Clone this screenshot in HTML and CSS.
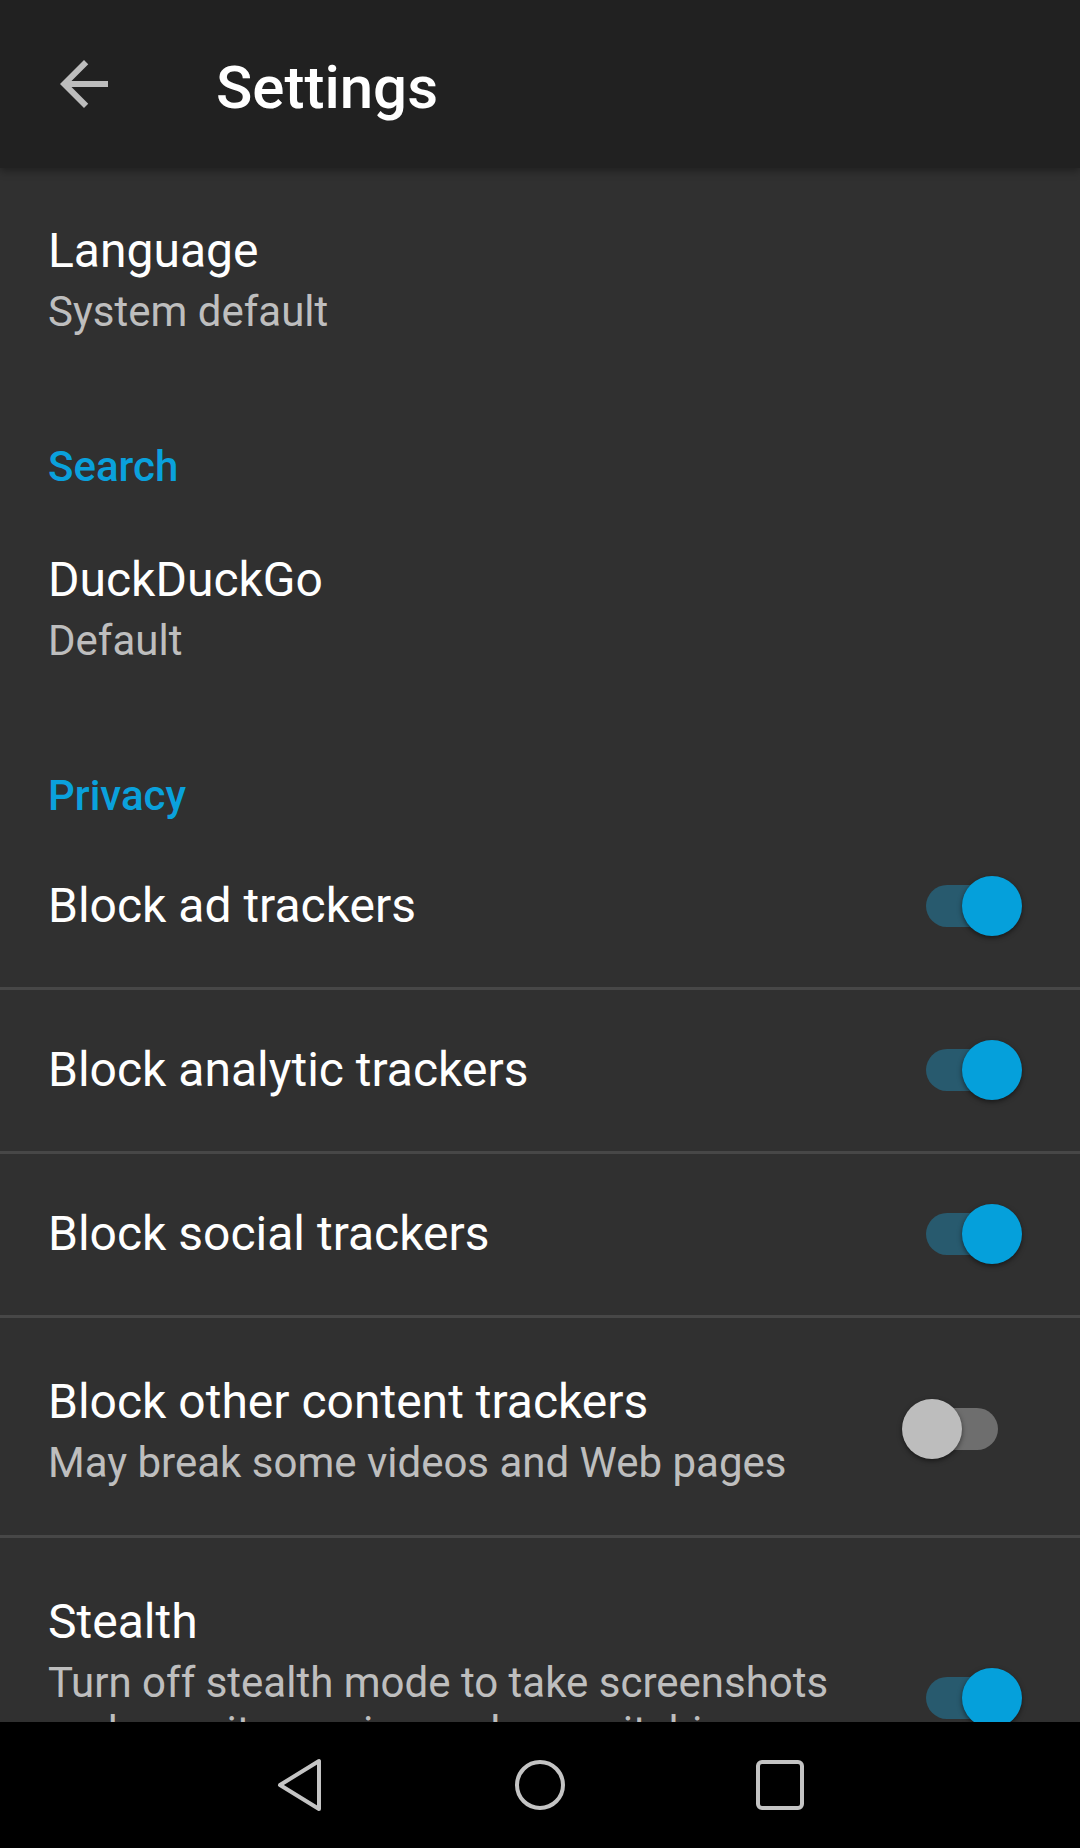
FILE: index.html
```html
<!DOCTYPE html>
<html lang="en">
<head>
<meta charset="utf-8">
<title>Settings</title>
<link rel="stylesheet" href="styles.css">
</head>
<body>
<div class="screen">
  <header class="toolbar">
    <button class="nav-back" aria-label="Back">
      <svg width="72" height="72" viewBox="0 0 24 24"><path d="M20 11H7.83l5.59-5.59L12 4l-8 8 8 8 1.41-1.41L7.83 13H20v-2z" fill="#bdbdbd"/></svg>
    </button>
    <h1 class="toolbar-title">Settings</h1>
  </header>

  <main class="content">
    <div class="pref pref-plain">
      <div class="pref-title">Language</div>
      <div class="pref-summary">System default</div>
    </div>

    <div class="category">Search</div>

    <div class="pref pref-plain">
      <div class="pref-title">DuckDuckGo</div>
      <div class="pref-summary">Default</div>
    </div>

    <div class="category">Privacy</div>

    <div class="pref pref-switch">
      <div class="pref-text"><div class="pref-title">Block ad trackers</div></div>
      <div class="switch on"><span class="track"></span><span class="thumb"></span></div>
    </div>
    <div class="pref pref-switch">
      <div class="pref-text"><div class="pref-title">Block analytic trackers</div></div>
      <div class="switch on"><span class="track"></span><span class="thumb"></span></div>
    </div>
    <div class="pref pref-switch">
      <div class="pref-text"><div class="pref-title">Block social trackers</div></div>
      <div class="switch on"><span class="track"></span><span class="thumb"></span></div>
    </div>
    <div class="pref pref-switch has-summary">
      <div class="pref-text">
        <div class="pref-title">Block other content trackers</div>
        <div class="pref-summary">May break some videos and Web pages</div>
      </div>
      <div class="switch off"><span class="track"></span><span class="thumb"></span></div>
    </div>
    <div class="pref pref-switch has-summary">
      <div class="pref-text">
        <div class="pref-title">Stealth</div>
        <div class="pref-summary">Turn off stealth mode to take screenshots and see site previews when switching apps in Klar.</div>
      </div>
      <div class="switch on"><span class="track"></span><span class="thumb"></span></div>
    </div>
  </main>

  <nav class="navbar">
    <div class="nav-btn">
      <svg width="48" height="54" viewBox="0 0 48 54"><path d="M43 3 L43 51 L4 27 Z" fill="none" stroke="#c4c4c4" stroke-width="4" stroke-linejoin="round"/></svg>
    </div>
    <div class="nav-btn">
      <svg width="54" height="54" viewBox="0 0 54 54"><circle cx="27" cy="27" r="23" fill="none" stroke="#c4c4c4" stroke-width="4"/></svg>
    </div>
    <div class="nav-btn">
      <svg width="50" height="52" viewBox="0 0 50 52"><rect x="3" y="3" width="44" height="46" rx="4" fill="none" stroke="#c4c4c4" stroke-width="4"/></svg>
    </div>
  </nav>
</div>
</body>
</html>
```

FILE: styles.css
```css
* { box-sizing: border-box; }

html, body {
  margin: 0;
  padding: 0;
  background: #303030;
}

body {
  font-family: Roboto, "Noto Sans", "Liberation Sans", sans-serif;
  color: #ffffff;
}

.screen {
  width: 1080px;
  height: 1848px;
  display: flex;
  flex-direction: column;
  overflow: hidden;
  background: #303030;
}

/* Toolbar */
.toolbar {
  flex: none;
  height: 168px;
  background: #212121;
  display: flex;
  align-items: center;
  position: relative;
  z-index: 2;
  box-shadow: 0 3px 8px rgba(0, 0, 0, 0.35);
}

.nav-back {
  width: 72px;
  height: 72px;
  margin-left: 48px;
  padding: 0;
  border: 0;
  background: none;
  display: flex;
}

.toolbar-title {
  margin: 7px 0 0 96px;
  font-size: 60px;
  font-weight: 500;
  line-height: 1;
  color: #ffffff;
  letter-spacing: 0;
}

/* Content */
.content {
  flex: 1;
  overflow: hidden;
}

.pref {
  padding-left: 48px;
  padding-right: 48px;
}

.pref-plain {
  padding-top: 51px;
}

.pref-title {
  font-size: 48px;
  line-height: 64px;
  color: #ffffff;
}

.pref-summary {
  margin-top: 4px;
  font-size: 42px;
  line-height: 49px;
  color: rgba(255, 255, 255, 0.7);
}

.category {
  padding: 101px 48px 0;
  font-size: 42px;
  font-weight: 500;
  line-height: 60px;
  color: #0aa1dc;
}

.pref-switch {
  display: flex;
  align-items: center;
  padding-top: 48px;
  padding-bottom: 49px;
  border-bottom: 3px solid #474747;
}

.pref-switch.has-summary {
  padding-top: 52px;
  padding-bottom: 48px;
}

.pref-text {
  flex: 1;
  min-width: 0;
  margin-right: 32px;
}

/* Switch */
.switch {
  flex: none;
  position: relative;
  width: 120px;
  height: 60px;
  margin-right: 10px;
}

.switch .track {
  position: absolute;
  left: 24px;
  top: 9px;
  width: 72px;
  height: 42px;
  border-radius: 21px;
}

.switch .thumb {
  position: absolute;
  top: 0;
  width: 60px;
  height: 60px;
  border-radius: 50%;
  box-shadow: 0 2px 5px rgba(0, 0, 0, 0.5);
}

.switch.on .track { background: #285a6e; }
.switch.on .thumb { left: 60px; background: #05a0db; }

.switch.off .track { background: #6e6e6e; }
.switch.off .thumb { left: 0; background: #bdbdbd; }

/* Navigation bar */
.navbar {
  flex: none;
  height: 126px;
  background: #000000;
  display: flex;
  justify-content: center;
  align-items: center;
  position: relative;
  z-index: 2;
}

.nav-btn {
  width: 240px;
  height: 126px;
  display: flex;
  justify-content: center;
  align-items: center;
}

.nav-btn svg { display: block; }
```
